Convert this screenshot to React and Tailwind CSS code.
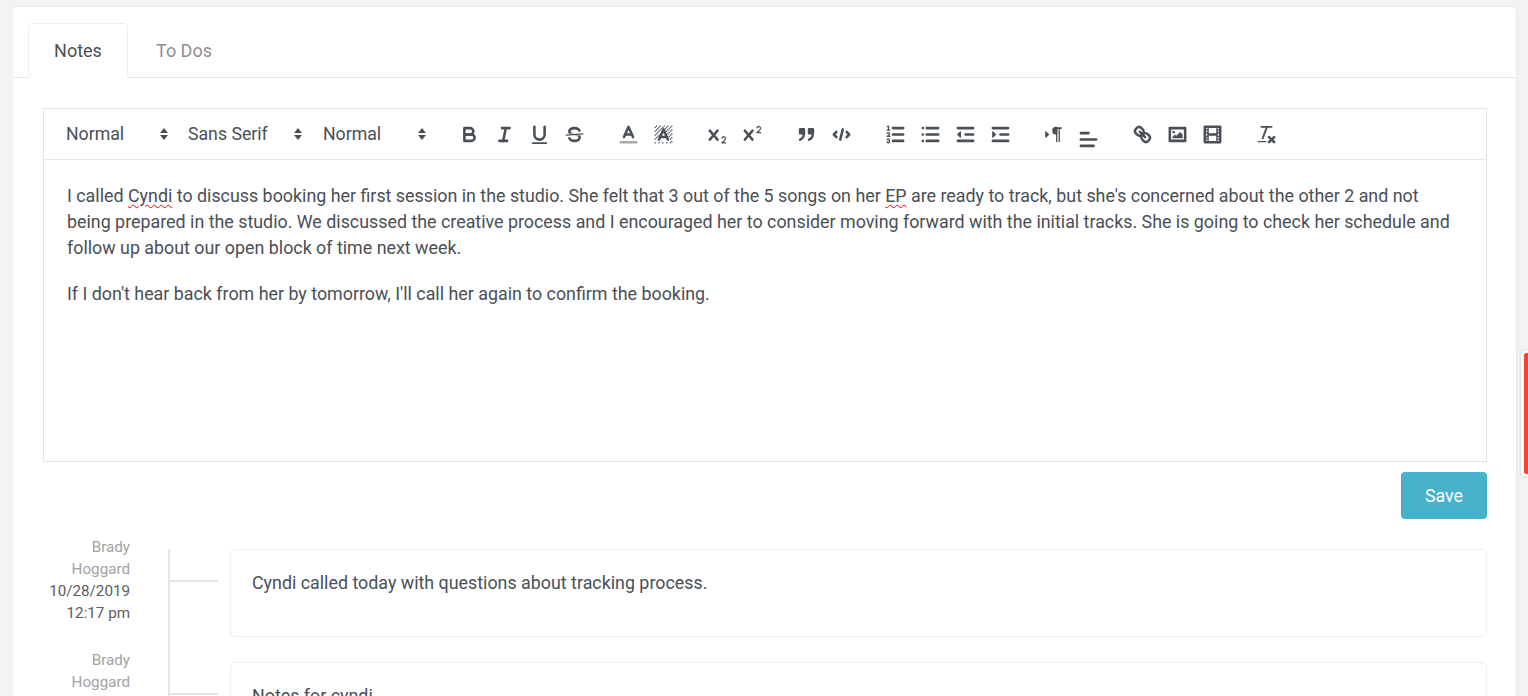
import React from 'react';

const Ico = ({ className = '', children }) => (
  <svg viewBox="0 0 18 18" className={`w-[23px] h-[23px] fill-none stroke-[#495057] stroke-[2] [stroke-linecap:round] [stroke-linejoin:round] ${className}`}>
    {children}
  </svg>
);

const fill = 'fill-[#495057] stroke-none';

// hatch cells for the background colour icon, leaving room round the letter
const hatch = [];
for (let x = 2; x < 16; x++) {
  for (let y = 2; y < 16; y++) {
    const nearLetter = y >= 4 && y <= 14 && Math.abs(x + 0.5 - 9) < (y - 3.5) * 0.45 + 1;
    if ((x + y) % 3 === 2 && !nearLetter) hatch.push([x, y]);
  }
}

const groups = [
  [
    <Ico><path d="M5,4H9.5A2.5,2.5,0,0,1,12,6.5v0A2.5,2.5,0,0,1,9.5,9H5V4Z" /><path d="M5,9h5.5A2.5,2.5,0,0,1,13,11.5v0A2.5,2.5,0,0,1,10.5,14H5V9Z" /></Ico>,
    <Ico><line x1="7" x2="13" y1="4" y2="4" /><line x1="5" x2="11" y1="14" y2="14" /><line x1="8" x2="10" y1="14" y2="4" /></Ico>,
    <Ico><path d="M5,3V9a4.012,4.012,0,0,0,4,4H9a4.012,4.012,0,0,0,4-4V3" /><rect className={fill} height="1.4" rx=".7" width="12" x="3" y="15" /></Ico>,
    <Ico>
      <line className="stroke-[1]" x1="15.5" x2="2.5" y1="8.5" y2="9.5" />
      <path className={fill} d="M9.007,8C6.542,7.791,6,7.519,6,6.5,6,5.792,7.283,5,9,5c1.571,0,2.765.679,2.969,1.309a1,1,0,0,0,1.9-.617C13.356,4.106,11.354,3,9,3,6.2,3,4,4.538,4,6.5a3.2,3.2,0,0,0,.5,1.843Z" />
      <path className={fill} d="M8.984,10C11.457,10.208,12,10.479,12,11.5c0,.708-1.283,1.5-3,1.5-1.571,0-2.765-.679-2.969-1.309a1,1,0,1,0-1.9.617C4.644,13.894,6.646,15,9,15c2.8,0,5-1.538,5-3.5a3.2,3.2,0,0,0-.5-1.843Z" />
    </Ico>,
  ],
  [
    <Ico><line className="stroke-[#aaaaaa]" x1="3" x2="15" y1="15" y2="15" /><polyline points="5.5 11 9 3 12.5 11" /><line x1="11.63" x2="6.38" y1="9" y2="9" /></Ico>,
    <Ico>
      {hatch.map(([x, y]) => <rect key={`${x}-${y}`} className={fill} x={x} y={y} width="1" height="1" />)}
      <polyline points="5.5 13 9 5 12.5 13" /><line x1="11.63" x2="6.38" y1="11" y2="11" />
    </Ico>,
  ],
  [
    <Ico>
      <path className={fill} d="M15.5,15H13.861a3.858,3.858,0,0,0,1.914-2.975,1.8,1.8,0,0,0-1.6-1.751A1.921,1.921,0,0,0,12.021,11.7a0.50013,0.50013,0,1,0,.957.291h0a0.914,0.914,0,0,1,1.053-.725,0.81,0.81,0,0,1,.744.762c0,1.076-1.16971,1.86982-1.93971,2.43082A1.45639,1.45639,0,0,0,12,15.5a0.5,0.5,0,0,0,.5.5h3A0.5,0.5,0,0,0,15.5,15Z" />
      <path className={fill} d="M9.65,5.241a1,1,0,0,0-1.409.108L6,7.964,3.759,5.349A1,1,0,0,0,2.192,6.59178Q2.2146,6.6202,2.241,6.651L4.684,9.5,2.241,12.35A1,1,0,0,0,3.71,13.70722q0.02739-.02966.05-0.06l2.24-2.61,2.241,2.61A1,1,0,0,0,9.79,12.35L7.316,9.5,9.759,6.651A1,1,0,0,0,9.65,5.241Z" />
    </Ico>,
    <Ico>
      <path className={fill} d="M15.5,7H13.861a4.015,4.015,0,0,0,1.914-2.975,1.8,1.8,0,0,0-1.6-1.751A1.922,1.922,0,0,0,12.021,3.7a0.5,0.5,0,1,0,.957.291,0.917,0.917,0,0,1,1.053-.725,0.81,0.81,0,0,1,.744.762c0,1.077-1.164,1.925-1.934,2.486A1.423,1.423,0,0,0,12,7.5a0.5,0.5,0,0,0,.5.5h3A0.5,0.5,0,0,0,15.5,7Z" />
      <path className={fill} d="M9.651,5.241a1,1,0,0,0-1.41.108L6,7.964,3.759,5.349a1,1,0,1,0-1.519,1.3L4.683,9.5,2.241,12.35a1,1,0,1,0,1.519,1.3L6,11.036l2.241,2.615a1,1,0,0,0,1.519-1.3L7.317,9.5,9.759,6.651A1,1,0,0,0,9.651,5.241Z" />
    </Ico>,
  ],
  [
    <Ico>
      <rect className="fill-[#495057]" height="3" width="3" x="4" y="5" /><rect className="fill-[#495057]" height="3" width="3" x="11" y="5" />
      <path d="M7,8c0,4.031-3,5-3,5" /><path d="M14,8c0,4.031-3,5-3,5" />
    </Ico>,
    <Ico><polyline points="5 7 3 9 5 11" /><polyline points="13 7 15 9 13 11" /><line x1="10" x2="8" y1="5" y2="13" /></Ico>,
  ],
  [
    <Ico>
      <line x1="7" x2="15" y1="4" y2="4" /><line x1="7" x2="15" y1="9" y2="9" /><line x1="7" x2="15" y1="14" y2="14" />
      <line className="stroke-[1]" x1="2.5" x2="4.5" y1="5.5" y2="5.5" />
      <path className={fill} d="M3.5,6A0.5,0.5,0,0,1,3,5.5V3.085l-0.276.138A0.5,0.5,0,0,1,2.053,3c-0.124-.247-0.023-0.324.224-0.447l1-.5A0.5,0.5,0,0,1,4,2.5v3A0.5,0.5,0,0,1,3.5,6Z" />
      <path className="stroke-[1]" d="M4.5,10.5h-2c0-.234,1.85-1.076,1.85-2.234A0.959,0.959,0,0,0,2.5,8.156" />
      <path className="stroke-[1]" d="M2.5,14.846a0.959,0.959,0,0,0,1.85-.109A0.7,0.7,0,0,0,3.75,14a0.688,0.688,0,0,0,.6-0.736,0.959,0.959,0,0,0-1.85-.109" />
    </Ico>,
    <Ico>
      <line x1="6" x2="15" y1="4" y2="4" /><line x1="6" x2="15" y1="9" y2="9" /><line x1="6" x2="15" y1="14" y2="14" />
      <line x1="3" x2="3" y1="4" y2="4" /><line x1="3" x2="3" y1="9" y2="9" /><line x1="3" x2="3" y1="14" y2="14" />
    </Ico>,
    <Ico>
      <line x1="3" x2="15" y1="14" y2="14" /><line x1="3" x2="15" y1="4" y2="4" /><line x1="9" x2="15" y1="9" y2="9" />
      <polygon className="fill-[#495057] stroke-[1]" points="5 7 5 11 3 9 5 7" />
    </Ico>,
    <Ico>
      <line x1="3" x2="15" y1="14" y2="14" /><line x1="3" x2="15" y1="4" y2="4" /><line x1="9" x2="15" y1="9" y2="9" />
      <polygon className="fill-[#495057] stroke-[1]" points="3 7 3 11 5 9 3 7" />
    </Ico>,
  ],
  [
    <Ico>
      <polygon className="fill-[#495057] stroke-[1]" points="3 11 5 9 3 7 3 11" />
      <line className="stroke-[1.2]" x1="15" x2="11" y1="4" y2="4" />
      <path className={fill} d="M11,3a3,3,0,0,0,0,6h1V3H11Z" />
      <rect className={fill} height="11" width="1" x="11" y="4" /><rect className={fill} height="11" width="1" x="13" y="4" />
    </Ico>,
    <Ico className="mt-[10px]">
      <line x1="3" x2="15" y1="9" y2="9" /><line x1="3" x2="13" y1="14" y2="14" /><line x1="3" x2="9" y1="4" y2="4" />
    </Ico>,
  ],
  [
    <Ico>
      <line x1="7" x2="11" y1="7" y2="11" />
      <path d="M8.9,4.577a3.476,3.476,0,0,1,.36,4.679A3.476,3.476,0,0,1,4.577,8.9C3.185,7.5,2.035,6.4,4.217,4.217S7.5,3.185,8.9,4.577Z" />
      <path d="M13.423,9.1a3.476,3.476,0,0,0-4.679-.36,3.476,3.476,0,0,0,.36,4.679c1.392,1.392,2.5,2.542,4.679.36S14.815,10.5,13.423,9.1Z" />
    </Ico>,
    <Ico>
      <rect height="10" width="12" x="3" y="4" /><circle className={fill} cx="6" cy="7" r="1" />
      <polyline className={fill} points="5 12 5 11 7 9 8 10 11 7 13 9 13 12 5 12" />
    </Ico>,
    <Ico>
      <rect height="12" width="12" x="3" y="3" />
      <rect className={fill} height="12" width="1" x="5" y="3" /><rect className={fill} height="12" width="1" x="12" y="3" /><rect className={fill} height="2" width="8" x="5" y="8" />
      <rect className={fill} height="1" width="3" x="3" y="5" /><rect className={fill} height="1" width="3" x="3" y="7" /><rect className={fill} height="1" width="3" x="3" y="10" /><rect className={fill} height="1" width="3" x="3" y="12" />
      <rect className={fill} height="1" width="3" x="12" y="5" /><rect className={fill} height="1" width="3" x="12" y="7" /><rect className={fill} height="1" width="3" x="12" y="10" /><rect className={fill} height="1" width="3" x="12" y="12" />
    </Ico>,
  ],
  [
    <Ico>
      <line className="stroke-[1.5]" x1="5" x2="13" y1="3" y2="3" /><line className="stroke-[1.5]" x1="6" x2="9.35" y1="12" y2="3" />
      <line x1="11" x2="15" y1="11" y2="15" /><line x1="15" x2="11" y1="11" y2="15" />
      <rect className={fill} height="1" rx=".5" width="7" x="2" y="14" />
    </Ico>,
  ],
];

function Picker({ label, width, gap }) {
  return (
    <div className={`flex items-center justify-between shrink-0 ${width} ${gap}`}>
      <span>{label}</span>
      <svg viewBox="0 0 8 12" className="w-2 h-3 fill-[#495057]">
        <path d="M4 0 8 5H0zM0 7h8l-4 5z" />
      </svg>
    </div>
  );
}

function Entry({ date, time, text }) {
  return (
    <div className="flex items-start pb-[25px]">
      <div className="w-[87px] shrink-0 -mt-[13px] text-right text-[15.2px] leading-[22px]">
        <p className="text-[#a3a3a3]">Brady Hoggard</p>
        <p className="text-[#5c5c5c]">{date}</p>
        <p className="text-[#5c5c5c]">{time}</p>
      </div>
      <div className="w-[50px] ml-[38px] mr-3 shrink-0 self-stretch border-l-2 border-[#e4e4e4] -mb-[25px]">
        <div className="h-[2px] mt-[31px] bg-[#e4e4e4]" />
      </div>
      <div className="flex-1 h-[88px] border border-[#eeeeee] rounded-[5px] px-[21px] py-[20px] text-[17.85px] leading-[26px] text-[#495057]">
        {text}
      </div>
    </div>
  );
}

const Typo = ({ children }) => (
  <span className="underline decoration-wavy decoration-[#e80000] decoration-1 underline-offset-2">{children}</span>
);

export default function App() {
  return (
    <div className="relative h-screen overflow-hidden bg-[#f3f3f3] pl-[13px] pr-[11px] pt-[6px] [font-family:Roboto,sans-serif] text-[#495057]">
      <div className="bg-white rounded-[5px] border-t border-r border-[#e8e8e8] min-h-full">
        {/* Tabs */}
        <div className="flex pl-[15px] pt-[16px] border-b border-[#e9e9e9] h-[71px] text-[18px]">
          <div className="w-[100px] h-[55px] pb-[2px] flex items-center justify-center bg-white border border-b-0 border-[#eeeeee] rounded-t-[5px]">Notes</div>
          <div className="w-[112px] h-[55px] flex items-center justify-center text-[#8f8f8f]">To Dos</div>
        </div>

        <div className="pl-[30px] pr-[29px] pt-[30px]">
          {/* Editor */}
          <div className="border border-[#e4e4e4]">
            <div className="flex items-center h-[51px] pl-[22px] border-b border-[#e9e9e9] text-[17.7px]">
              <Picker label="Normal" width="w-[102px]" gap="mr-[20px]" />
              <Picker label="Sans Serif" width="w-[114px]" gap="mr-[21px]" />
              <Picker label="Normal" width="w-[103px]" gap="mr-[26px]" />
              {groups.map((icons, i) => (
                <div key={i} className="flex mr-[18.9px]">
                  {icons.map((icon, j) => (
                    <div key={j} className="w-[35px] h-[28px] flex items-center justify-center">{icon}</div>
                  ))}
                </div>
              ))}
            </div>
            <div className="h-[301px] px-[23px] pt-[23px] text-[17.85px] leading-[26px] text-[#4a4f55]">
              <p className="mb-[20px]">
                I called <Typo>Cyndi</Typo> to discuss booking her first session in the studio. She felt that 3 out of the 5 songs on her <Typo>EP</Typo> are ready to track, but she's concerned about the other 2 and not being prepared in the studio. We discussed the creative process and I encouraged her to consider moving forward with the initial tracks. She is going to check her schedule and follow up about our open block of time next week.
              </p>
              <p>If I don't hear back from her by tomorrow, I'll call her again to confirm the booking.</p>
            </div>
          </div>

          <div className="flex justify-end mt-[10px] mb-[30px]">
            <button className="w-[86px] h-[47px] pt-[2px] rounded-[4px] bg-[#47b2cb] text-white text-[17.8px]">Save</button>
          </div>

          {/* Timeline */}
          <Entry date="10/28/2019" time="12:17 pm" text="Cyndi called today with questions about tracking process." />
          <Entry date="10/28/2019" time="12:17 pm" text="Notes for cyndi" />
        </div>
      </div>

      {/* Side handle */}
      <div className="absolute right-0 top-[350px] w-[7px] h-[127px] bg-[#f44336] border-[3px] border-r-0 border-white rounded-l-[5px] shadow-[0_0_2px_rgba(0,0,0,0.25)]" />
    </div>
  );
}
